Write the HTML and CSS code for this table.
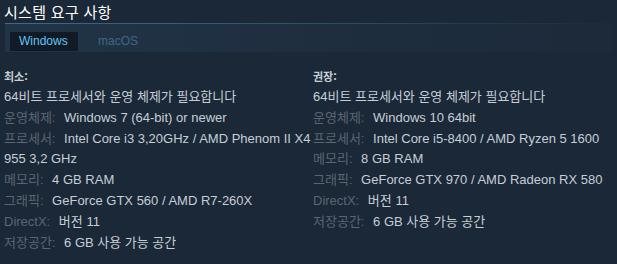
FILE: index.html
```html
<!DOCTYPE html>
<html lang="ko">
<head>
<meta charset="utf-8">
<link rel="stylesheet" href="styles.css">
</head>
<body>
<div class="page">
  <h2 class="title">시스템 요구 사항</h2>
  <div class="tabs">
    <span class="tab active">Windows</span>
    <span class="tab">macOS</span>
  </div>
  <div class="cols">
    <div class="col">
      <div class="head">최소:</div>
      <ul class="reqs">
        <li>64비트 프로세서와 운영 체제가 필요합니다</li>
        <li><span class="lbl">운영체제:</span> Windows 7 (64-bit) or newer</li>
        <li><span class="lbl">프로세서:</span> Intel Core i3 3,20GHz / AMD Phenom II X4 955 3,2 GHz</li>
        <li><span class="lbl">메모리:</span> 4 GB RAM</li>
        <li><span class="lbl">그래픽:</span> GeForce GTX 560 / AMD R7-260X</li>
        <li><span class="lbl">DirectX:</span> 버전 11</li>
        <li><span class="lbl">저장공간:</span> 6 GB 사용 가능 공간</li>
      </ul>
    </div>
    <div class="col">
      <div class="head">권장:</div>
      <ul class="reqs">
        <li>64비트 프로세서와 운영 체제가 필요합니다</li>
        <li><span class="lbl">운영체제:</span> Windows 10 64bit</li>
        <li><span class="lbl">프로세서:</span> Intel Core i5-8400 / AMD Ryzen 5 1600</li>
        <li><span class="lbl">메모리:</span> 8 GB RAM</li>
        <li><span class="lbl">그래픽:</span> GeForce GTX 970 / AMD Radeon RX 580</li>
        <li><span class="lbl">DirectX:</span> 버전 11</li>
        <li><span class="lbl">저장공간:</span> 6 GB 사용 가능 공간</li>
      </ul>
    </div>
  </div>
</div>
</body>
</html>
```
FILE: styles.css
```css
html, body {
  margin: 0;
  padding: 0;
  background: #1b2838;
  height: 100%;
}
body {
  font-family: "Liberation Sans", "Noto Sans CJK KR", Arial, sans-serif;
  color: #c6ced6;
}
.page {
  padding: 0 5px 0 4px;
}
.title {
  margin: 0;
  height: 23px;
  font-family: "Noto Sans CJK KR", "Liberation Sans", sans-serif;
  font-size: 15px;
  font-weight: 400;
  line-height: 23px;
  color: #ffffff;
  letter-spacing: 0.3px;
}
.tabs {
  margin-left: 1px;
  height: 29px;
  box-sizing: border-box;
  padding: 9px 0 0 5px;
  display: flex;
  align-items: flex-start;
  background: linear-gradient(to right, #213447 0%, #1e2d3e 60%, #1c2a3a 100%);
  position: relative;
}
.tabs::before {
  content: "";
  position: absolute;
  left: 0;
  right: 0;
  top: 0;
  height: 1px;
  background: linear-gradient(to right, #3e6a89 0%, #2f5069 50%, #1c2a3a 100%);
}
.tab {
  font-size: 12px;
  height: 19px;
  line-height: 19px;
  padding: 0 9px;
  color: #3f6786;
}
.tab.active {
  background: #111b26;
  color: #67c1f5;
  width: 50px;
  margin-right: 11px;
}
.cols {
  display: grid;
  grid-template-columns: 309px 1fr;
  column-gap: 0;
  padding-top: 17px;
}
.head {
  font-family: "Noto Sans CJK KR", sans-serif;
  font-size: 11px;
  font-weight: 700;
  line-height: 14px;
  color: #c6ced6;
  margin-bottom: 4px;
}
.reqs {
  list-style: none;
  margin: 0;
  padding: 0;
  font-size: 13px;
  line-height: 20.8px;
}
.reqs li {
  margin: 0;
}
.lbl {
  color: #5c6570;
  margin-right: 5px;
}
```
